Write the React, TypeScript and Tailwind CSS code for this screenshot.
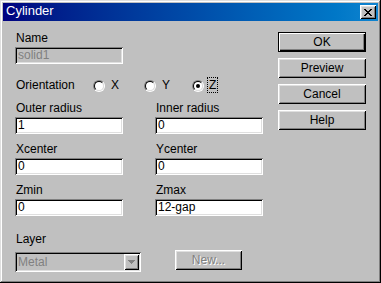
import React from "react";

const raised =
  "shadow-[inset_1px_1px_0_#fff,inset_-1px_-1px_0_#000,inset_2px_2px_0_#dfdfdf,inset_-2px_-2px_0_#808080]";
const sunken =
  "shadow-[inset_1px_1px_0_#808080,inset_-1px_-1px_0_#fff,inset_2px_2px_0_#000,inset_-2px_-2px_0_#dfdfdf]";

function Field({ label, value, disabled }: { label: string; value: string; disabled?: boolean }) {
  return (
    <div className="flex flex-col">
      <div className="h-[14px] leading-[14px] pl-[1px]">{label}</div>
      <div
        className={`mt-[2px] h-[17px] w-[108px] ${sunken} ${
          disabled ? "bg-[#c0c0c0] text-[#808080]" : "bg-white text-black"
        } pl-[3px] pt-[2px] leading-[13px]`}
      >
        {value}
      </div>
    </div>
  );
}

function Radio({ checked }: { checked?: boolean }) {
  return (
    <div className="mt-[2px] w-[12px] h-[12px] rounded-full border border-t-[#808080] border-l-[#808080] border-r-white border-b-white">
      <div className="w-[10px] h-[10px] rounded-full border border-t-black border-l-black border-r-[#dfdfdf] border-b-[#dfdfdf] bg-white flex items-center justify-center">
        {checked && <div className="w-[4px] h-[4px] rounded-full bg-black" />}
      </div>
    </div>
  );
}

function Btn({ children, def, disabled, w = "w-[88px]" }: { children: React.ReactNode; def?: boolean; disabled?: boolean; w?: string }) {
  if (def) {
    return (
      <div className={`${w} h-[20px] border border-black`}>
        <div className="h-full shadow-[inset_1px_1px_0_#fff,inset_-1px_-1px_0_#000,inset_-2px_-2px_0_#808080] flex items-center justify-center leading-[14px]">
          {children}
        </div>
      </div>
    );
  }
  return (
    <div
      className={`${w} h-[20px] ${raised} flex items-center justify-center leading-[14px] ${
        disabled ? "text-[#808080] [text-shadow:1px_1px_0_#fff]" : ""
      }`}
    >
      {children}
    </div>
  );
}

export default function App() {
  return (
    <div className="w-[381px] h-[283px] bg-[#c0c0c0] p-[3px] text-[12px] text-black font-['Liberation_Sans',Arial,sans-serif] shadow-[inset_-1px_-1px_0_#000,inset_1px_1px_0_#dfdfdf,inset_-2px_-2px_0_#808080,inset_2px_2px_0_#fff] overflow-hidden">
      {/* Title bar */}
      <div className="h-[18px] bg-linear-to-r from-[#000080] to-[#1084d0] flex items-start justify-between">
        <div className="pl-[3px] text-white text-[13px] leading-[16px]">Cylinder</div>
        <div className={`mt-[2px] mr-[2px] w-[16px] h-[14px] bg-[#c0c0c0] ${raised} flex items-center justify-center`}>
          <svg width="8" height="7" viewBox="0 0 8 7" shapeRendering="crispEdges">
            <path
              d="M0 0h2v1H0zM6 0h2v1H6zM1 1h2v1H1zM5 1h2v1H5zM2 2h4v1H2zM3 3h2v1H3zM2 4h4v1H2zM1 5h2v1H1zM5 5h2v1H5zM0 6h2v1H0zM6 6h2v1H6z"
              fill="#000"
            />
          </svg>
        </div>
      </div>

      {/* Body */}
      <div className="flex">
        <div className="ml-[12px] w-[248px] pt-[10px]">
          <Field label="Name" value="solid1" disabled />

          <div className="mt-[14px] flex items-start h-[14px] leading-[14px]">
            <div className="w-[78px] pl-[1px]">Orientation</div>
            <div className="w-[51px] flex items-start">
              <Radio />
              <span className="ml-[6px]">X</span>
            </div>
            <div className="w-[48px] flex items-start">
              <Radio />
              <span className="ml-[6px]">Y</span>
            </div>
            <div className="flex items-start">
              <Radio checked />
              <span className="ml-[3px] -mt-[1px] border border-dotted border-black px-[1px] leading-[14px]">Z</span>
            </div>
          </div>

          <div className="mt-[9px] grid grid-cols-[108px_108px] gap-x-[32px] gap-y-[8px]">
            <Field label="Outer radius" value="1" />
            <Field label="Inner radius" value="0" />
            <Field label="Xcenter" value="0" />
            <Field label="Ycenter" value="0" />
            <Field label="Zmin" value="0" />
            <Field label="Zmax" value="12-gap" />
          </div>

          <div className="mt-[16px]">
            <div className="h-[14px] leading-[14px] pl-[1px]">Layer</div>
            <div className="mt-[4px] flex items-start">
              <div className={`mt-[2px] w-[126px] h-[20px] ${sunken} bg-[#c0c0c0] flex items-center justify-between pl-[3px] pr-[2px]`}>
                <span className="text-[#808080] leading-[14px]">Metal</span>
                <div className={`w-[15px] h-[16px] ${raised} flex items-center justify-center`}>
                  <svg width="7" height="4" viewBox="0 0 7 4" shapeRendering="crispEdges">
                    <path d="M0 0h7v1H0zM1 1h5v1H1zM2 2h3v1H2zM3 3h1v1H3z" fill="#808080" />
                  </svg>
                </div>
              </div>
              <div className="ml-[34px]">
                <Btn disabled w="w-[67px]">New...</Btn>
              </div>
            </div>
          </div>
        </div>

        <div className="ml-[15px] mt-[11px] flex flex-col gap-[6px]">
          <Btn def>OK</Btn>
          <Btn>Preview</Btn>
          <Btn>Cancel</Btn>
          <Btn>Help</Btn>
        </div>
      </div>
    </div>
  );
}
